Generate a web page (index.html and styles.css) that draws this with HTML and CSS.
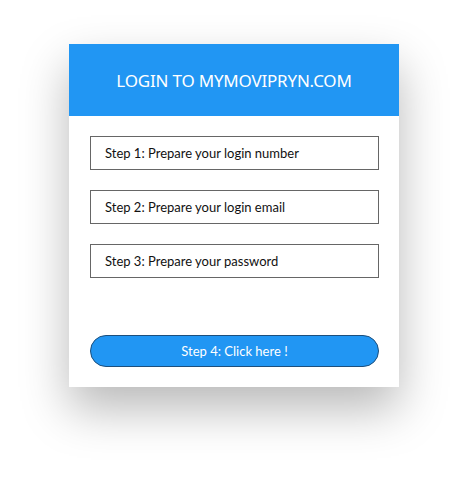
FILE: index.html
```html
<!DOCTYPE html>
<html lang="en">
<head>
    <meta charset="UTF-8">
    <meta name="viewport" content="width=device-width, initial-scale=1.0">
    <title>Login</title>
    <link rel="stylesheet" href="styles.css">
</head>
<body>
    <div class="card">
        <div class="card-header">
            <h2>LOGIN TO MYMOVIPRYN.COM</h2>
        </div>
        <form class="card-body">
            <!-- Steps -->
            <input type="text" placeholder="Step 1: Prepare your login number">
            <input type="text" placeholder="Step 2: Prepare your login email">
            <input type="text" placeholder="Step 3: Prepare your password">

            <button type="button">Step 4: Click here !</button>
        </form>
    </div>
</body>
</html>
```

FILE: styles.css
```css
* {
    margin: 0;
    padding: 0;
    box-sizing: border-box;
}
html, body {
    min-height: 480px;
}
body {
    font-family: Lato, "Noto Sans", Arial, sans-serif;
    background: #fff;
    color: #111;
    padding: 44px 0 92px;
}
.card {
    width: 330px;
    margin: 0 auto;
    background: white;
    box-shadow: 0 22px 45px rgba(0, 0, 0, 0.28);
}
.card-header {
    height: 72px;
    background-color: #2196f3;
    display: flex;
    align-items: center;
    justify-content: center;
}
.card-header h2 {
    color: white;
    font-family: "Noto Sans", Arial, sans-serif;
    font-weight: normal;
    font-size: 17px;
    letter-spacing: -0.2px;
}
.card-body {
    display: flex;
    flex-direction: column;
    gap: 20px;
    padding: 20px 20px 20px 21px;
}
input {
    width: 289px;
    height: 34px;
    padding: 0 14px;
    font-family: inherit;
    font-size: 13px;
    border: 1px solid #666;
    outline: none;
}
input::placeholder {
    color: #111;
}
button {
    width: 289px;
    height: 32px;
    margin-top: 37px;
    background-color: #2196f3;
    color: white;
    font-family: inherit;
    font-size: 13px;
    border: 1px solid #1d4f7c;
    border-radius: 16px;
    cursor: pointer;
}
```
